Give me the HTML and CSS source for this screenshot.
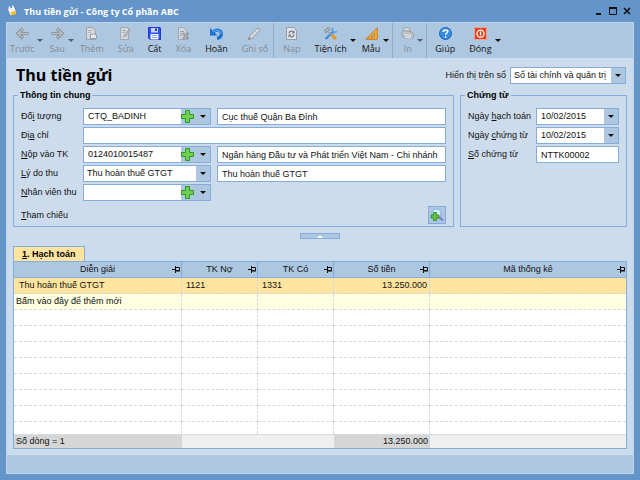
FILE: index.html
```html
<!DOCTYPE html>
<html lang="vi">
<head>
    <meta charset="UTF-8">
    <meta name="viewport" content="width=device-width, initial-scale=1.0">
    <title>Thu tiền gửi - Công ty Cổ phần ABC</title>
    <link rel="stylesheet" href="styles.css">
</head>
<body>

<header class="titlebar">
    <svg class="app-icon" viewBox="0 0 12 13">
        <path d="M0 2l9-2 3 9-9 4z" fill="#4f7fd0"/>
        <path d="M1 4l8-2 2 7-7 3z" fill="#f3f6ff"/>
        <path d="M2 1h2v3H2zM6 0h2v3H6z" fill="#fff"/>
        <path d="M4 8l6-2 1 4-6 2z" fill="#f2c230"/>
    </svg>
    <span class="app-title">Thu tiền gửi - Công ty Cổ phần ABC</span>
    <div class="window-controls">
        <button aria-label="Thu nhỏ"><svg viewBox="0 0 8 8"><path d="M1 7h5" stroke="#111" stroke-width="2"/></svg></button>
        <button aria-label="Phóng to"><svg viewBox="0 0 8 8"><path d="M.5 1.5h7v6h-7z" fill="none" stroke="#111"/><path d="M0 1h8" stroke="#111" stroke-width="2"/></svg></button>
        <button aria-label="Đóng cửa sổ"><svg viewBox="0 0 8 8"><path d="M1 1l6 6M7 1L1 7" stroke="#111" stroke-width="1.6"/></svg></button>
    </div>
</header>

<div class="window">
    <nav class="toolbar">
        <button class="tool" disabled>
            <svg viewBox="0 0 13 13"><path d="M7 1.5l-5 5 5 5M2 6.5h10.500" fill="none" stroke="#858b92" stroke-width="3.200"/><path d="M7 1.5l-5 5 5 5M2.500 6.5h9.500" fill="none" stroke="#bcc1c6" stroke-width="1.300"/></svg>
            Trước
        </button>
        <button class="caret off" aria-label="Danh sách trước"></button>
        <button class="tool" disabled>
            <svg viewBox="0 0 13 13"><path d="M6 1.5l5 5-5 5M11 6.5H.5" fill="none" stroke="#858b92" stroke-width="3.200"/><path d="M6 1.5l5 5-5 5M10.500 6.5H1" fill="none" stroke="#bcc1c6" stroke-width="1.300"/></svg>
            Sau
        </button>
        <button class="caret off" aria-label="Danh sách sau"></button>
        <button class="tool" disabled>
            <svg viewBox="0 0 13 13"><path d="M1.5.5h6l3 3v9h-9z" fill="#d3d6da" stroke="#9da3aa"/><path d="M3.5 3.500h3M3.500 5.500h2" stroke="#a9aeb4"/><path d="M5.500 7.500h2l1-1 3 1.500v3.500h-6z" fill="#e4e6e8" stroke="#989ea5"/></svg>
            Thêm
        </button>
        <button class="tool" disabled>
            <svg viewBox="0 0 13 13"><path d="M1.5.5h8v12h-8z" fill="#d3d6da" stroke="#a3a8ae"/><path d="M3.500 3.500h3M3.500 5.500h2M3.500 9.500h2" stroke="#9ba1a8"/><path d="M6 9l5-6" stroke="#8f959b" stroke-width="2.500"/><path d="M6.500 8.500l4.500-5" stroke="#dfe1e4"/></svg>
            Sửa
        </button>
        <button class="tool">
            <svg viewBox="0 0 13 13"><path d="M.5.5H12l.5.5v11.500H2L.5 11z" fill="#2f50f0" stroke="#2036c8"/><path d="M3 1h7v4.500H3z" fill="#c9d4ff"/><path d="M7 1.500h2V4H7z" fill="#263ac0"/><path d="M2.500 7h8v5.500h-8z" fill="#f4f6ff"/><path d="M4 8.500h5M4 10.500h5" stroke="#93a3e8"/></svg>
            Cất
        </button>
        <button class="tool" disabled>
            <svg viewBox="0 0 13 13"><path d="M1.5.5h5l3 3v9h-8z" fill="#d3d6da" stroke="#a3a8ae"/><path d="M3 4.500h4M3 6.500h2M3 8.500h2" stroke="#9ba1a8"/><path d="M6 6l5.500 6M11.500 6L6 12" stroke="#868c93" stroke-width="2.200"/><path d="M6.500 6.500l4.500 5M11 6.500l-4.500 5" stroke="#c5c9cd" stroke-width=".8"/></svg>
            Xóa
        </button>
        <button class="tool">
            <svg viewBox="0 0 13 13"><path d="M3 5.500C6 1.500 11.300 3 11.300 7c0 2.500-1.800 4-4.300 4.300" fill="none" stroke="#1b6fd0" stroke-width="3.200"/><path d="M0 1v7.500h7.500z" fill="#1b6fd0"/><path d="M3 5C6 2.300 10.800 3.300 11 7" fill="none" stroke="#56a8f4" stroke-width="1.400"/></svg>
            Hoãn
        </button>
        <button class="tool" disabled>
            <svg viewBox="0 0 13 13"><path d="M.5 12.500l1-3.500L10 .8l2.300 2.300L4 11.500z" fill="#ced1d4" stroke="#959ba2"/><path d="M3 9.500l7-7" stroke="#eceef0"/><path d="M.5 12.500l.7-2 1.500 1.300z" fill="#777"/></svg>
            Ghi sổ
        </button>
        <span class="separator"></span>
        <button class="tool" disabled>
            <svg viewBox="0 0 13 13"><path d="M1.5.5h7l3 3v9h-10z" fill="#e1e3e6" stroke="#979da4"/><path d="M4 6.500c.3-3 4-3 4.500-.8M9 7.500c-.3 3-4 3-4.500.8" fill="none" stroke="#777e86" stroke-width="1.300"/><path d="M9.500 3.500v3h-3zM3.500 10.500v-3h3z" fill="#777e86"/></svg>
            Nạp
        </button>
        <button class="tool">
            <svg viewBox="0 0 13 13"><path d="M1.500 12L10 4" stroke="#3d8ed8" stroke-width="2.400"/><path d="M9 .8L8 4l2 1.500 3-1" fill="none" stroke="#5aa7e6" stroke-width="1.800"/><path d="M4.500 5L8 8.500" stroke="#9a9fa5" stroke-width="1.500"/><path d="M8 8l3.800 4.200" stroke="#e6952c" stroke-width="3"/><path d="M1 5l4.500-4" stroke="#858a90" stroke-width="3.200"/><path d="M1.500 4.500l3.500-3" stroke="#f2e8c8"/></svg>
            Tiện ích
        </button>
        <button class="caret" aria-label="Mở Tiện ích"></button>
        <button class="tool">
            <svg viewBox="0 0 13 13"><path d="M12.300 1v11.300H.8z" fill="#f2ae3c" stroke="#c87c1c"/><path d="M9.500 6.500V10H6z" fill="#aec7e1" stroke="#b5752a" stroke-width=".8"/><path d="M3 11.500l1-1M5 11.500l1-1M7 11.500l1-1" stroke="#9b5d16" stroke-width=".7"/></svg>
            Mẫu
        </button>
        <button class="caret" aria-label="Mở Mẫu"></button>
        <span class="separator"></span>
        <button class="tool" disabled>
            <svg viewBox="0 0 13 13"><path d="M2 1l6-.5 1 4.500H3z" fill="#d7dadd" stroke="#959ba2" stroke-width=".8"/><path d="M.5 5.500l3-2 7.500 1.500 1.500 2.500v3l-3 1.500-8-2z" fill="#bec3c8" stroke="#90969d" stroke-width=".8"/><path d="M4 7.500L10 9M4 10l6 1.300" stroke="#eee"/></svg>
            In
        </button>
        <button class="caret off" aria-label="Mở In"></button>
        <span class="separator"></span>
        <button class="tool">
            <svg viewBox="0 0 13 13"><circle cx="6.500" cy="6.500" r="6" fill="#3489e0" stroke="#1d63b8"/><path d="M2 5a4.800 4.800 0 0 1 9 0C8 3.800 5 3.800 2 5z" fill="#7dbaf3"/><path d="M4.600 5c0-2.500 4-2.500 4-.2 0 1.500-2 1.500-2 3.200" fill="none" stroke="#fff" stroke-width="1.400"/><circle cx="6.600" cy="9.900" r=".9" fill="#fff"/></svg>
            Giúp
        </button>
        <button class="tool">
            <svg viewBox="0 0 13 13"><rect x=".5" y=".5" width="12" height="12" rx="1" fill="#e2401f" stroke="#f0a594"/><circle cx="6.500" cy="6.700" r="3.500" fill="none" stroke="#fff" stroke-width="1.300"/><path d="M6.500 4.500v4" stroke="#fff" stroke-width="1.300"/></svg>
            Đóng
        </button>
        <button class="caret" aria-label="Mở Đóng"></button>
    </nav>

    <main class="content">
        <div class="page-head">
            <h1>Thu tiền gửi</h1>
            <label for="book">Hiển thị trên sổ</label>
            <div class="select-box book-select">
                <select id="book"><option>Sổ tài chính và quản trị</option></select>
            </div>
        </div>

        <form class="forms">
            <fieldset class="general">
                <legend>Thông tin chung</legend>
                <div class="row">
                    <label for="object">Đố<u>i</u> tượng</label>
                    <div class="combo">
                        <input type="text" id="object" value="CTQ_BADINH">
                        <button type="button" class="add" aria-label="Thêm đối tượng"><svg viewBox="0 0 13 13"><path d="M4.500 .5h4v4h4v4h-4v4h-4v-4h-4v-4h4z" fill="#6fd04f" stroke="#2f9a2c"/></svg></button>
                        <button type="button" class="drop" aria-label="Chọn đối tượng"></button>
                    </div>
                    <input type="text" class="wide" aria-label="Tên đối tượng" value="Cục thuế Quận Ba Đình">
                </div>
                <div class="row">
                    <label for="address">Đị<u>a</u> chỉ</label>
                    <input type="text" class="wide" id="address">
                </div>
                <div class="row">
                    <label for="account"><u>N</u>ộp vào TK</label>
                    <div class="combo">
                        <input type="text" id="account" value="0124010015487">
                        <button type="button" class="add" aria-label="Thêm tài khoản"><svg viewBox="0 0 13 13"><path d="M4.500 .5h4v4h4v4h-4v4h-4v-4h-4v-4h4z" fill="#6fd04f" stroke="#2f9a2c"/></svg></button>
                        <button type="button" class="drop" aria-label="Chọn tài khoản"></button>
                    </div>
                    <input type="text" class="wide" aria-label="Tên ngân hàng" value="Ngân hàng Đầu tư và Phát triển Việt Nam - Chi nhánh">
                </div>
                <div class="row">
                    <label for="reason"><u>L</u>ý do thu</label>
                    <div class="select-box reason-select">
                        <select id="reason"><option>Thu hoàn thuế GTGT</option></select>
                    </div>
                    <input type="text" class="wide" aria-label="Diễn giải lý do" value="Thu hoàn thuế GTGT">
                </div>
                <div class="row">
                    <label for="staff"><u>N</u>hân viên thu</label>
                    <div class="combo">
                        <input type="text" id="staff">
                        <button type="button" class="add" aria-label="Thêm nhân viên"><svg viewBox="0 0 13 13"><path d="M4.500 .5h4v4h4v4h-4v4h-4v-4h-4v-4h4z" fill="#6fd04f" stroke="#2f9a2c"/></svg></button>
                        <button type="button" class="drop" aria-label="Chọn nhân viên"></button>
                    </div>
                </div>
                <div class="row reference">
                    <label for="lookup"><u>T</u>ham chiếu</label>
                    <button type="button" class="lookup" id="lookup">
                        <svg viewBox="0 0 14 14"><path d="M9 9l4 3.500" stroke="#8d7fd6" stroke-width="2.400"/><circle cx="6.500" cy="5.500" r="4.500" fill="#d9efff" stroke="#79b4e4"/><path d="M3.500 4.500h3v2.500H9v3H6.500v2.500h-3V10H1V7h2.500z" fill="#62c043" stroke="#2b8a28" stroke-width=".8"/></svg>
                    </button>
                </div>
            </fieldset>

            <fieldset class="voucher">
                <legend>Chứng từ</legend>
                <div class="row">
                    <label for="postDate">Ngày <u>h</u>ạch toán</label>
                    <div class="combo">
                        <input type="text" id="postDate" value="10/02/2015">
                        <button type="button" class="drop" aria-label="Chọn ngày hạch toán"></button>
                    </div>
                </div>
                <div class="row">
                    <label for="docDate">Ngày <u>c</u>hứng từ</label>
                    <div class="combo">
                        <input type="text" id="docDate" value="10/02/2015">
                        <button type="button" class="drop" aria-label="Chọn ngày chứng từ"></button>
                    </div>
                </div>
                <div class="row">
                    <label for="docNo"><u>S</u>ố chứng từ</label>
                    <input type="text" class="wide" id="docNo" value="NTTK00002">
                </div>
            </fieldset>
        </form>

        <button class="collapse" aria-label="Thu gọn"></button>

        <button class="tab"><u>1</u>. Hạch toán</button>
        <table class="grid">
            <colgroup>
                <col class="col-desc"><col class="col-acc"><col class="col-acc"><col class="col-money"><col>
            </colgroup>
            <thead>
                <tr>
                    <th><div class="head">Diễn giải<svg viewBox="0 0 8 7"><path d="M0 3.500h3M3.500 0v7M3.500 1.500h4v3h-4M3 5h5" fill="none" stroke="#111"/></svg></div></th>
                    <th><div class="head">TK Nợ<svg viewBox="0 0 8 7"><path d="M0 3.500h3M3.500 0v7M3.500 1.500h4v3h-4M3 5h5" fill="none" stroke="#111"/></svg></div></th>
                    <th><div class="head">TK Có<svg viewBox="0 0 8 7"><path d="M0 3.500h3M3.500 0v7M3.500 1.500h4v3h-4M3 5h5" fill="none" stroke="#111"/></svg></div></th>
                    <th><div class="head">Số tiền<svg viewBox="0 0 8 7"><path d="M0 3.500h3M3.500 0v7M3.500 1.500h4v3h-4M3 5h5" fill="none" stroke="#111"/></svg></div></th>
                    <th><div class="head">Mã thống kê<svg viewBox="0 0 8 7"><path d="M0 3.500h3M3.500 0v7M3.500 1.500h4v3h-4M3 5h5" fill="none" stroke="#111"/></svg></div></th>
                </tr>
            </thead>
            <tbody>
                <tr class="selected"><td>Thu hoàn thuế GTGT</td><td>1121</td><td>1331</td><td class="money">13.250.000</td><td></td></tr>
                <tr class="new-row"><td>Bấm vào đây để thêm mới</td><td></td><td></td><td></td><td></td></tr>
                <tr><td></td><td></td><td></td><td></td><td></td></tr>
                <tr><td></td><td></td><td></td><td></td><td></td></tr>
                <tr><td></td><td></td><td></td><td></td><td></td></tr>
                <tr><td></td><td></td><td></td><td></td><td></td></tr>
                <tr><td></td><td></td><td></td><td></td><td></td></tr>
                <tr><td></td><td></td><td></td><td></td><td></td></tr>
                <tr><td></td><td></td><td></td><td></td><td></td></tr>
                <tr class="last"><td></td><td></td><td></td><td></td><td></td></tr>
            </tbody>
            <tfoot>
                <tr><td class="total">Số dòng = 1</td><td></td><td></td><td class="total money">13.250.000</td><td></td></tr>
            </tfoot>
        </table>
    </main>

    <footer class="statusbar"></footer>
</div>

</body>
</html>
```
FILE: styles.css
```css
:root {
    --frame: #6495c9;
    --bar: #aec7e1;
    --panel: #cddcec;
    --line: #86acd9;
    --ui-font: "Liberation Sans", Arial, sans-serif;
    --bar-font: "Open Sans", "Noto Sans", sans-serif;
}
* {
    box-sizing: border-box;
}
body {
    margin: 0;
    min-height: 100vh;
    display: flex;
    flex-direction: column;
    background: var(--frame);
    font-family: var(--ui-font);
    font-size: 9px;
    line-height: 13px;
    color: #111;
}
button, input, select {
    font: inherit;
    color: inherit;
    margin: 0;
    padding: 0;
    border: none;
    border-radius: 0;
    background: none;
}
svg {
    display: block;
}

/* Title bar */
.titlebar {
    display: flex;
    align-items: center;
    height: 22px;
    padding: 0 9px 0 7px;
}
.app-icon {
    width: 10px;
    height: 12px;
}
.app-title {
    flex: 1;
    margin-left: 7px;
    font-family: var(--bar-font);
    font-weight: 700;
    color: #fff;
}
.window-controls {
    display: flex;
    gap: 6px;
}
.window-controls svg {
    width: 8px;
    height: 8px;
}

.window {
    flex: 1;
    display: flex;
    flex-direction: column;
    margin: 0 6px 6px;
    border: 1px solid #bfd3ea;
    background: var(--panel);
}

/* Toolbar */
.toolbar {
    display: flex;
    height: 35px;
    background: var(--bar);
    font-family: var(--bar-font);
    line-height: 12px;
}
.tool {
    display: flex;
    flex-direction: column;
    align-items: center;
    padding: 4px 7px 0;
    gap: 3px;
    white-space: nowrap;
}
.tool:first-child {
    padding-left: 3px;
}
.tool:disabled {
    color: #838b95;
}
.tool svg {
    width: 13px;
    height: 13px;
}
.caret {
    display: flex;
    align-items: center;
    width: 5px;
    margin-left: -4px;
}
.caret::before, .drop::before, .select-box::after {
    content: "";
    border: 3px solid transparent;
    border-top-color: #111;
    border-bottom-width: 0;
}
.caret.off::before {
    border-top-color: #555f6b;
}
.separator {
    width: 1px;
    margin: 0 2px 0 -2px;
    background: #8fa9c6;
}
.caret + .separator {
    margin: 0 1px 0 4px;
}

/* Form */
.content {
    flex: 1;
    padding: 5px 6px;
}
.page-head {
    display: flex;
    align-items: center;
    height: 24px;
    padding: 0 1px 0 3px;
}
h1 {
    flex: 1;
    margin: 0;
    font-family: var(--bar-font);
    font-size: 16px;
    line-height: 24px;
    color: #000;
}
.forms {
    display: flex;
    gap: 6px;
    margin-top: 2px;
}
fieldset {
    min-width: 0;
    margin: 0;
    padding: 7px 7px 0;
    border: 1px solid var(--line);
}
legend {
    margin-left: -3px;
    padding: 0 2px;
    font-weight: 700;
    line-height: 12px;
    color: #000;
}
.general {
    flex: 1;
}
.voucher {
    width: 167px;
}
.row {
    display: flex;
    align-items: center;
    height: 17px;
    margin-bottom: 2px;
}
.row label {
    width: 62px;
    white-space: nowrap;
}
.voucher .row label {
    width: 68px;
}
input {
    width: 100%;
    min-width: 0;
    padding: 0 4px;
}
.wide {
    flex: 1;
    height: 17px;
    border: 1px solid var(--line);
    background: #fff;
}
.combo, .select-box {
    display: flex;
    align-items: stretch;
    min-width: 0;
    height: 17px;
    border: 1px solid var(--line);
    background: #fff;
}
.general .combo, .reason-select {
    width: 128px;
    margin-right: 6px;
}
.voucher .combo {
    flex: 1;
}
.combo input {
    flex: 1;
}
.add {
    width: 15px;
    background: var(--bar);
}
.add svg {
    width: 13px;
    height: 13px;
}
.drop {
    display: flex;
    align-items: center;
    justify-content: center;
    width: 14px;
    background: var(--bar);
}
.select-box {
    position: relative;
    background: linear-gradient(var(--bar), var(--bar)) right / 14px 100% no-repeat #fff;
}
.select-box select {
    width: 100%;
    padding-left: 3px;
    appearance: none;
}
.select-box::after {
    position: absolute;
    right: 4px;
    top: 6px;
}
.book-select {
    width: 116px;
    margin-left: 4px;
}
.reference {
    justify-content: space-between;
    height: 18px;
    margin-top: 5px;
}
.lookup {
    display: flex;
    align-items: center;
    justify-content: center;
    width: 18px;
    height: 18px;
    border: 1px solid var(--line);
    background: var(--bar);
}
.lookup svg {
    width: 14px;
    height: 14px;
}
.collapse {
    display: flex;
    align-items: center;
    justify-content: center;
    width: 40px;
    height: 6px;
    margin: 6px auto 7px;
    border: 1px solid var(--line);
    background: var(--bar);
}
.collapse::before {
    content: "";
    border: 3px solid transparent;
    border-bottom-color: #fff;
    border-top-width: 0;
}

/* Accounting grid */
.tab {
    display: block;
    height: 15px;
    padding: 0 8px;
    border: 1px solid var(--line);
    border-bottom: none;
    background: #ffe4a0;
    font-weight: 700;
    color: #000;
}
.grid {
    width: 100%;
    table-layout: fixed;
    border-collapse: separate;
    border-spacing: 0;
    border: 1px solid var(--line);
    background: #fff;
}
.col-desc {
    width: 168px;
}
.col-acc {
    width: 76px;
}
.col-money {
    width: 96px;
}
.grid th {
    height: 16px;
    padding: 0;
    border-right: 1px solid var(--line);
    border-bottom: 1px solid var(--line);
    background: var(--bar);
    font-weight: 400;
}
.head {
    display: flex;
    align-items: center;
    justify-content: center;
    position: relative;
}
.head svg {
    position: absolute;
    right: 1px;
    width: 8px;
    height: 7px;
}
.grid td {
    height: 16px;
    padding: 0 4px;
    border-right: 1px dashed #d9d9d9;
    border-bottom: 1px dashed #d9d9d9;
    white-space: nowrap;
}
.grid td:first-child {
    padding-left: 2px;
}
.grid tr > :last-child {
    border-right: none;
}
.grid .selected td {
    background: #ffe4a0;
}
.grid .selected td:first-child {
    padding-left: 5px;
}
.grid .new-row td {
    background: #ffffe1;
}
.grid .last td {
    height: 12px;
    border-bottom: none;
}
.grid .money {
    padding-right: 2px;
    text-align: right;
}
.grid tfoot td {
    height: 14px;
    border-top: 1px solid #d3dde6;
    border-right: none;
    border-bottom: none;
    background: #efefef;
}
.grid tfoot .total {
    background: #d6d6d6;
}

.statusbar {
    height: 18px;
    background: var(--bar);
}
```
